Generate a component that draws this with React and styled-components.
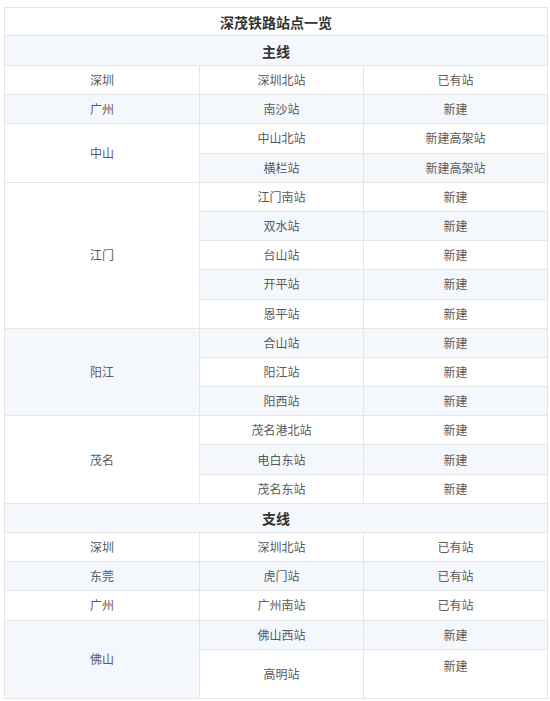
import React from 'react';
import styled, { createGlobalStyle } from 'styled-components';

const GlobalStyle = createGlobalStyle`
  html, body {
    margin: 0;
    padding: 0;
    background: #ffffff;
    font-family: 'Noto Sans CJK SC', 'Noto Sans', sans-serif;
  }
`;

const Page = styled.div`
  padding: 7px 3px 0 4px;
  width: 550px;
  box-sizing: border-box;
`;

const Table = styled.table`
  width: 543px;
  border-collapse: collapse;
  table-layout: fixed;
  font-size: 12px;
  color: #5a5a5a;
`;

const Row = styled.tr`
  height: ${(p) => p.$h || 29.2}px;
  background: ${(p) => (p.$alt ? '#f4f8fc' : '#ffffff')};
`;

const Cell = styled.td`
  border: 1px solid #e6e6e6;
  text-align: center;
  vertical-align: ${(p) => (p.$top ? 'top' : 'middle')};
  padding: ${(p) => (p.$top ? '7px 4px 0' : '0 4px')};
  line-height: 18px;
`;

const HeadCell = styled(Cell)`
  font-size: 14px;
  font-weight: bold;
  color: #333333;
`;

const main = [
  { city: '深圳', stations: [['深圳北站', '已有站']] },
  { city: '广州', stations: [['南沙站', '新建']] },
  { city: '中山', stations: [['中山北站', '新建高架站'], ['横栏站', '新建高架站']] },
  {
    city: '江门',
    stations: [
      ['江门南站', '新建'],
      ['双水站', '新建'],
      ['台山站', '新建'],
      ['开平站', '新建'],
      ['恩平站', '新建'],
    ],
  },
  { city: '阳江', stations: [['合山站', '新建'], ['阳江站', '新建'], ['阳西站', '新建']] },
  { city: '茂名', stations: [['茂名港北站', '新建'], ['电白东站', '新建'], ['茂名东站', '新建']] },
];

const branch = [
  { city: '深圳', stations: [['深圳北站', '已有站']] },
  { city: '东莞', stations: [['虎门站', '已有站']] },
  { city: '广州', stations: [['广州南站', '已有站']] },
  { city: '佛山', stations: [['佛山西站', '新建'], ['高明站', '新建', true]] },
];

const App = () => {
  let idx = 0;
  const rows = [];
  const next = () => {
    idx += 1;
    return idx % 2 === 0;
  };

  const addHead = (label, h) => {
    rows.push(
      <Row key={'h' + idx} $alt={next()} $h={h}>
        <HeadCell colSpan={3}>{label}</HeadCell>
      </Row>
    );
  };

  const addGroup = (groups, prefix) => {
    groups.forEach((g, gi) => {
      g.stations.forEach(([name, status, tall], si) => {
        rows.push(
          <Row key={prefix + gi + '-' + si} $alt={next()} $h={tall ? 49 : undefined}>
            {si === 0 && <Cell rowSpan={g.stations.length}>{g.city}</Cell>}
            <Cell>{name}</Cell>
            <Cell $top={tall}>{status}</Cell>
          </Row>
        );
      });
    });
  };

  addHead('深茂铁路站点一览', 28);
  addHead('主线', 30);
  addGroup(main, 'm');
  addHead('支线');
  addGroup(branch, 'b');

  return (
    <>
      <GlobalStyle />
      <Page>
        <Table>
          <colgroup>
            <col style={{ width: 195 }} />
            <col style={{ width: 164 }} />
            <col style={{ width: 184 }} />
          </colgroup>
          <tbody>{rows}</tbody>
        </Table>
      </Page>
    </>
  );
};

export default App;
